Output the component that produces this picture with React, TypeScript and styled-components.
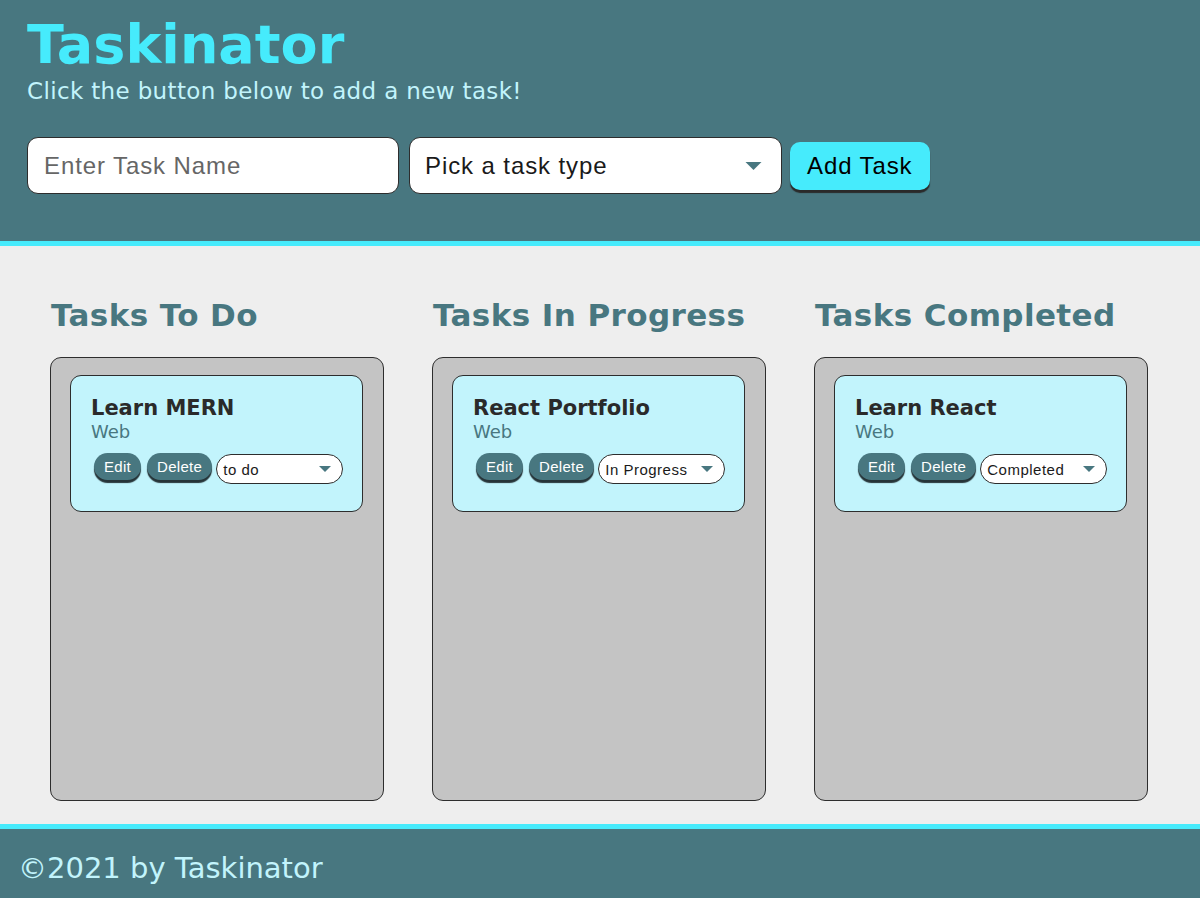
import React from "react";
import styled, { createGlobalStyle } from "styled-components";

const TEAL = "#487780";
const CYAN = "#46ebfc";
const LIGHT = "#c2f4fc";

const Global = createGlobalStyle`
  html, body { margin: 0; padding: 0; background: #eeeeee; }
  body { font-family: "DejaVu Sans", Verdana, sans-serif; }
  * { box-sizing: border-box; }
`;

const Header = styled.header`
  background: ${TEAL};
  border-bottom: 5px solid ${CYAN};
  padding: 13px 27px 0;
  height: 246px;
`;

const Title = styled.h1`
  margin: 0;
  font-size: 54px;
  font-weight: bold;
  line-height: normal;
  color: ${CYAN};
`;

const Subtitle = styled.p`
  margin: 2px 0 0;
  font-size: 23px;
  letter-spacing: 0.35px;
  line-height: normal;
  color: ${LIGHT};
`;

const Form = styled.form`
  display: flex;
  align-items: flex-start;
  margin-top: 33px;
`;

const TextInput = styled.input`
  width: 372px;
  height: 57px;
  border: 1.5px solid #2d2d2d;
  border-radius: 11px;
  background: #fff;
  padding: 0 16px;
  font-family: "Liberation Sans", Arial, sans-serif;
  font-size: 24px;
  letter-spacing: 0.9px;
  color: #222;
  outline: none;
  &::placeholder { color: #666; }
`;

const SelectWrap = styled.div<{ $w: number; $h: number; $ml: number; $mt: number }>`
  position: relative;
  width: ${(p) => p.$w}px;
  height: ${(p) => p.$h}px;
  margin-left: ${(p) => p.$ml}px;
  margin-top: ${(p) => p.$mt}px;
  flex: none;
`;

const NativeSelect = styled.select<{ $fs: number; $pl: number; $r: number; $ls: number }>`
  appearance: none;
  -webkit-appearance: none;
  width: 100%;
  height: 100%;
  border: 1.5px solid #2d2d2d;
  border-radius: ${(p) => p.$r}px;
  background: #fff;
  padding: 0 0 0 ${(p) => p.$pl}px;
  font-family: "Liberation Sans", Arial, sans-serif;
  font-size: ${(p) => p.$fs}px;
  letter-spacing: ${(p) => p.$ls}px;
  color: #1a1a1a;
  outline: none;
`;

const Arrow = styled.svg<{ $right: number }>`
  position: absolute;
  right: ${(p) => p.$right}px;
  top: 50%;
  transform: translateY(-50%);
  pointer-events: none;
`;

const AddButton = styled.button`
  margin-left: 8px;
  margin-top: 5px;
  height: 48px;
  padding: 0 17px;
  background: ${CYAN};
  border: none;
  border-radius: 10px;
  box-shadow: 0 3px 1px #2a2a2a;
  font-family: "Liberation Sans", Arial, sans-serif;
  font-size: 24px;
  letter-spacing: 0.9px;
  color: #000;
`;

const Main = styled.main`
  background: #eeeeee;
  display: flex;
  gap: 48px;
  padding: 52px 50px 23px;
`;

const Column = styled.section`
  width: 334px;
  flex: none;
`;

const ColumnTitle = styled.h2`
  margin: 0 0 25px 1px;
  font-size: 31px;
  letter-spacing: 0.4px;
  font-weight: bold;
  line-height: 34px;
  color: ${TEAL};
`;

const TaskList = styled.ul`
  list-style: none;
  margin: 0;
  height: 444px;
  padding: 17px 20px 0 19px;
  background: #c4c4c4;
  border: 1.5px solid #2d2d2d;
  border-radius: 11px;
`;

const TaskCard = styled.li`
  background: ${LIGHT};
  border: 1.5px solid #2d2d2d;
  border-radius: 11px;
  padding: 20px 20px 27px;
`;

const TaskName = styled.h3`
  margin: 0;
  font-size: 21px;
  font-weight: bold;
  line-height: normal;
  color: #2a2a2a;
`;

const TaskType = styled.span`
  display: block;
  margin-top: 1px;
  font-size: 18px;
  line-height: normal;
  color: ${TEAL};
`;

const Actions = styled.div`
  display: flex;
  align-items: flex-start;
  gap: 6px;
  margin-top: 11px;
  padding-left: 3px;
`;

const SmallButton = styled.button`
  height: 27px;
  padding: 0 10px;
  background: ${TEAL};
  color: #fff;
  border: none;
  border-radius: 14px;
  box-shadow: 0 3px 1px #263438;
  font-family: "Liberation Sans", Arial, sans-serif;
  font-size: 15px;
  letter-spacing: 0.3px;
`;

const Footer = styled.footer`
  background: ${TEAL};
  border-top: 5px solid ${CYAN};
  height: 75px;
  padding: 22px 18px 0;
  font-size: 29px;
  line-height: normal;
  color: ${LIGHT};
`;

const ArrowIcon = ({ w, h, right }: { w: number; h: number; right: number }) => (
  <Arrow $right={right} width={w} height={h} viewBox="0 0 16 8">
    <polygon points="0,0 16,0 8,8" fill={TEAL} />
  </Arrow>
);

type Task = { name: string; type: string; status: string };

const columns: { title: string; task: Task }[] = [
  { title: "Tasks To Do", task: { name: "Learn MERN", type: "Web", status: "to do" } },
  { title: "Tasks In Progress", task: { name: "React Portfolio", type: "Web", status: "In Progress" } },
  { title: "Tasks Completed", task: { name: "Learn React", type: "Web", status: "Completed" } },
];

export default function App() {
  return (
    <>
      <Global />
      <Header>
        <Title>Taskinator</Title>
        <Subtitle>Click the button below to add a new task!</Subtitle>
        <Form onSubmit={(e) => e.preventDefault()}>
          <TextInput placeholder="Enter Task Name" />
          <SelectWrap $w={373} $h={57} $ml={10} $mt={0}>
            <NativeSelect $fs={24} $pl={15} $r={11} $ls={0.9} defaultValue="">
              <option value="" disabled>
                Pick a task type
              </option>
              <option>Web</option>
              <option>Mobile</option>
              <option>Print</option>
            </NativeSelect>
            <ArrowIcon w={17} h={8} right={20} />
          </SelectWrap>
          <AddButton type="submit">Add Task</AddButton>
        </Form>
      </Header>
      <Main>
        {columns.map((c) => (
          <Column key={c.title}>
            <ColumnTitle>{c.title}</ColumnTitle>
            <TaskList>
              <TaskCard>
                <TaskName>{c.task.name}</TaskName>
                <TaskType>{c.task.type}</TaskType>
                <Actions>
                  <SmallButton>Edit</SmallButton>
                  <SmallButton>Delete</SmallButton>
                  <SelectWrap $w={127} $h={30} $ml={-2} $mt={1}>
                    <NativeSelect $fs={15} $pl={6} $r={15} $ls={0.5} defaultValue={c.task.status}>
                      <option>to do</option>
                      <option>In Progress</option>
                      <option>Completed</option>
                    </NativeSelect>
                    <ArrowIcon w={12} h={6} right={12} />
                  </SelectWrap>
                </Actions>
              </TaskCard>
            </TaskList>
          </Column>
        ))}
      </Main>
      <Footer>©2021 by Taskinator</Footer>
    </>
  );
}
